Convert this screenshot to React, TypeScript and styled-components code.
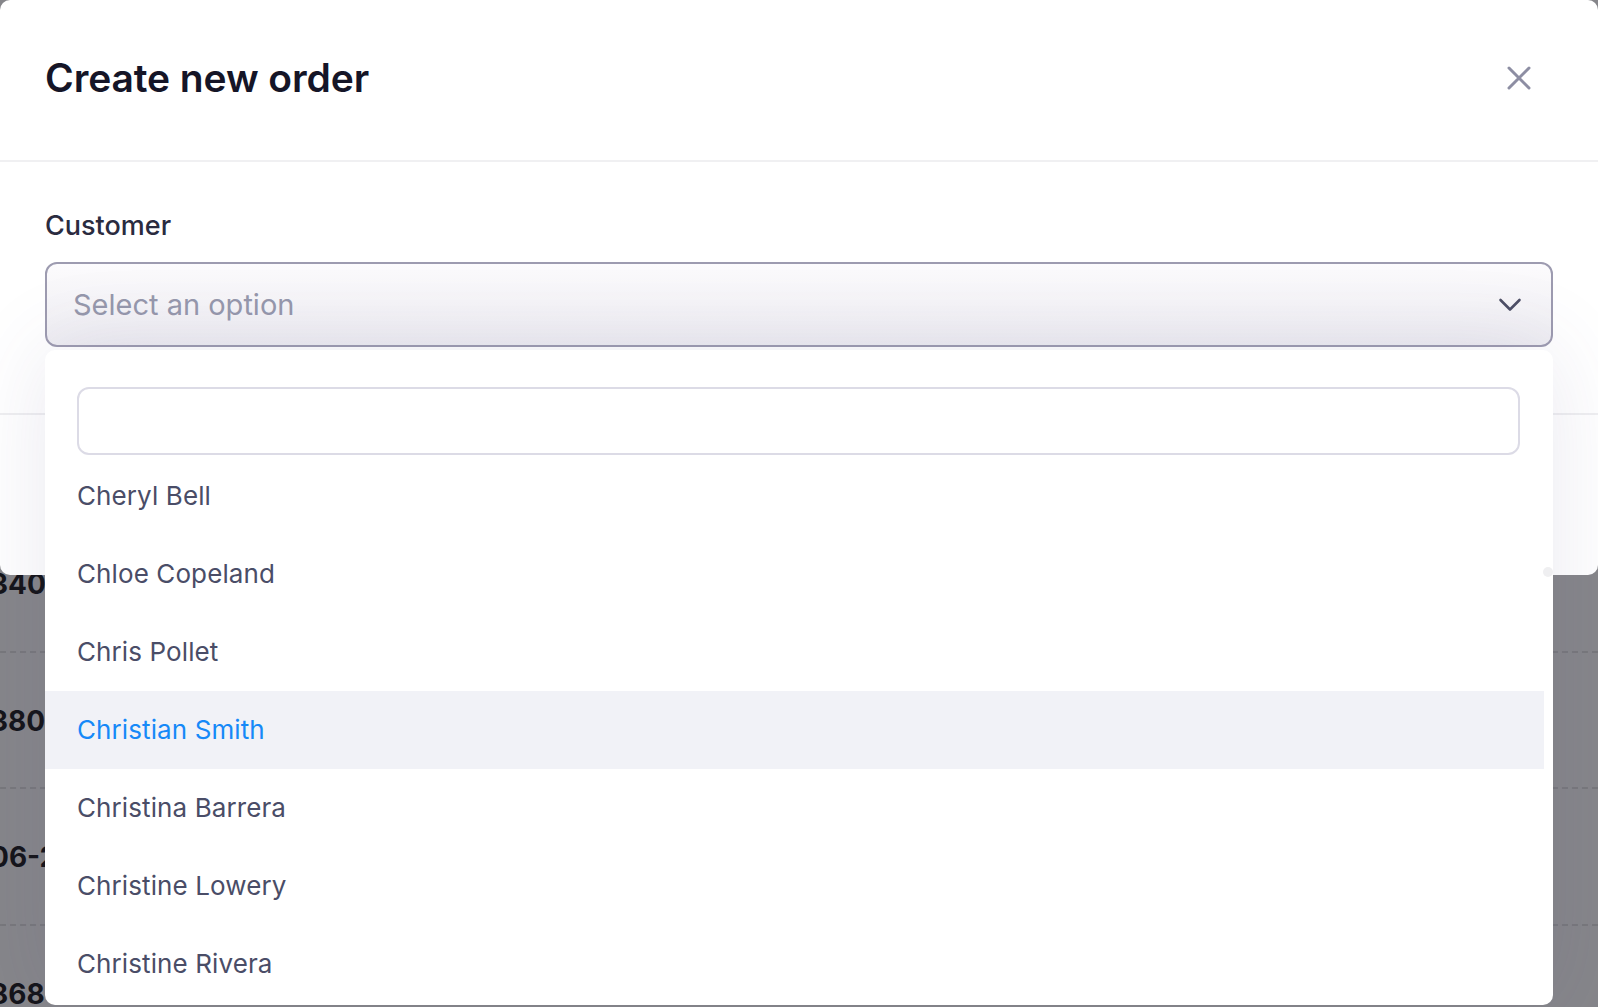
import React from "react";
import styled, { createGlobalStyle } from "styled-components";

const GlobalStyle = createGlobalStyle`
  html, body {
    margin: 0;
    padding: 0;
    height: 1007px;
    overflow: hidden;
    background: #86868a;
    font-family: Inter, "Noto Sans", "Liberation Sans", sans-serif;
  }
  * {
    box-sizing: border-box;
  }
`;

const customers = [
  "Cheryl Bell",
  "Chloe Copeland",
  "Chris Pollet",
  "Christian Smith",
  "Christina Barrera",
  "Christine Lowery",
  "Christine Rivera",
  "Christopher Hill",
];

const backdropRows = ["34012", "38021", "06-21", "86817"];

const Screen = styled.div`
  position: relative;
  width: 1598px;
  height: 1007px;
  overflow: hidden;
`;

const Backdrop = styled.div`
  display: flex;
  flex-direction: column;
  padding-top: 516px;
`;

const BackdropRow = styled.div`
  height: 136.5px;
  display: flex;
  align-items: center;
  padding-top: 2px;
  border-bottom: 2px dashed #78787c;
`;

const BackdropCell = styled.span`
  margin-left: -10px;
  font-size: 28px;
  font-weight: 700;
  color: #141419;
  white-space: nowrap;
`;

const Modal = styled.div`
  position: absolute;
  top: 0;
  left: 0;
  width: 1598px;
  height: 575px;
  background: #ffffff;
  border-radius: 10px;
  display: flex;
  flex-direction: column;
`;

const Header = styled.div`
  height: 162px;
  display: flex;
  align-items: center;
  justify-content: space-between;
  padding: 0 67px 4px 45px;
  border-bottom: 2px solid #f0f0f2;
`;

const Title = styled.h2`
  margin: 0 0 2px;
  font-size: 39px;
  font-weight: 600;
  letter-spacing: -0.1px;
  color: #151527;
`;

const CloseButton = styled.button`
  width: 24px;
  height: 24px;
  padding: 0;
  border: 0;
  background: none;
  display: flex;
  align-items: center;
  justify-content: center;
  cursor: pointer;
`;

const Body = styled.div`
  padding: 47px 45px 66px;
  display: flex;
  flex-direction: column;
`;

const Label = styled.label`
  font-size: 27px;
  line-height: 34px;
  font-weight: 500;
  color: #2a2b3f;
`;

const SelectBox = styled.div`
  margin-top: 19px;
  height: 85px;
  border: 2px solid #9d9bb0;
  border-radius: 12px;
  background: linear-gradient(180deg, #fcfbfd 0%, #f6f5f8 45%, #eeedf2 100%);
  display: flex;
  align-items: center;
  justify-content: space-between;
  padding: 0 29px 0 26px;
`;

const Placeholder = styled.span`
  font-size: 29px;
  color: #9698ac;
`;

const Footer = styled.div`
  flex: 1;
  border-top: 2px solid #efeff1;
`;

const Panel = styled.div`
  position: absolute;
  top: 350px;
  left: 45px;
  width: 1508px;
  height: 655px;
  background: #ffffff;
  border-radius: 10px;
  box-shadow: 0 0 90px rgba(80, 70, 130, 0.12);
  padding-top: 37px;
  display: flex;
  flex-direction: column;
`;

const SearchWrap = styled.div`
  padding: 0 33px 0 32px;
`;

const SearchInput = styled.input`
  width: 100%;
  height: 68px;
  border: 2px solid #dcdbe6;
  border-radius: 12px;
  background: #ffffff;
  outline: none;
  font: inherit;
  font-size: 26px;
  padding: 0 20px;
`;

const OptionList = styled.ul`
  list-style: none;
  margin: 2px 9px 0 0;
  padding: 0;
  overflow: hidden;
  flex: 1;
`;

const Option = styled.li<{ $active?: boolean }>`
  height: 78px;
  display: flex;
  align-items: center;
  padding-left: 32px;
  padding-bottom: 1px;
  font-size: 26px;
  letter-spacing: 0.1px;
  color: ${(p) => (p.$active ? "#1689f8" : "#4a4d67")};
  background: ${(p) => (p.$active ? "#f1f2f7" : "transparent")};
`;

const ScrollThumb = styled.span`
  position: absolute;
  left: 1498px;
  top: 217px;
  width: 10px;
  height: 10px;
  border-radius: 50%;
  background: #efeff1;
`;

const CloseIcon = () => (
  <svg width="24" height="24" viewBox="0 0 24 24" fill="none">
    <path d="M2 2 L22 22 M22 2 L2 22" stroke="#8d8ea3" strokeWidth="3" strokeLinecap="round" />
  </svg>
);

const ChevronIcon = () => (
  <svg width="24" height="14" viewBox="0 0 24 14" fill="none">
    <path d="M2.5 2 L12 11.5 L21.5 2" stroke="#4d4f66" strokeWidth="2.6" strokeLinecap="round" strokeLinejoin="round" />
  </svg>
);

const App = (): JSX.Element => {
  return (
    <Screen>
      <GlobalStyle />
      <Backdrop>
        {backdropRows.map((r) => (
          <BackdropRow key={r}>
            <BackdropCell>{r}</BackdropCell>
          </BackdropRow>
        ))}
      </Backdrop>

      <Modal>
        <Header>
          <Title>Create new order</Title>
          <CloseButton aria-label="Close">
            <CloseIcon />
          </CloseButton>
        </Header>
        <Body>
          <Label>Customer</Label>
          <SelectBox>
            <Placeholder>Select an option</Placeholder>
            <ChevronIcon />
          </SelectBox>
        </Body>
        <Footer />
      </Modal>

      <Panel>
        <SearchWrap>
          <SearchInput type="text" />
        </SearchWrap>
        <OptionList>
          {customers.map((c) => (
            <Option key={c} $active={c === "Christian Smith"}>
              {c}
            </Option>
          ))}
        </OptionList>
        <ScrollThumb />
      </Panel>
    </Screen>
  );
};

export default App;
